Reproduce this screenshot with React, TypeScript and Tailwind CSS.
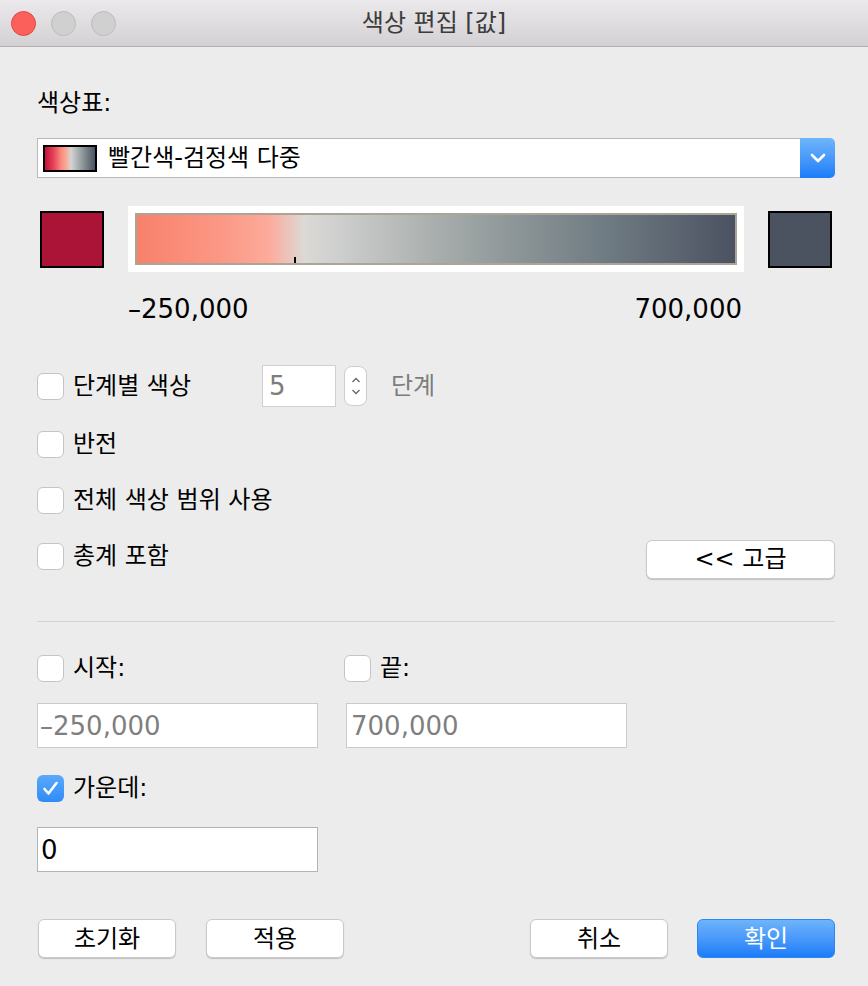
import React from "react";

const FONT = "font-['DejaVu_Sans','Noto_Sans_CJK_KR',sans-serif]";

function Checkbox({ checked = false }: { checked?: boolean }) {
  if (checked) {
    return (
      <div className="w-[27px] h-[27px] rounded-[6px] bg-gradient-to-b from-[#5aa9fb] to-[#2f8bf7] flex items-center justify-center shrink-0">
        <svg width="17" height="15" viewBox="0 0 17 15">
          <polyline points="2.5,8 6.5,12.5 14.5,2" fill="none" stroke="white" strokeWidth="2.6" strokeLinecap="round" strokeLinejoin="round" />
        </svg>
      </div>
    );
  }
  return <div className="w-[27px] h-[27px] rounded-[6px] bg-white border border-[#c4c4c4] shrink-0" />;
}

function Button({ label, primary = false }: { label: string; primary?: boolean }) {
  return (
    <div
      className={
        primary
          ? "w-[138px] h-[39px] rounded-[6px] bg-gradient-to-b from-[#6eb4fb] to-[#1a7cf8] border border-[#2d86f5] flex items-center justify-center text-white text-[24px] leading-none"
          : "w-[138px] h-[39px] rounded-[6px] bg-white border border-[#c9c9c9] shadow-[0_1px_1px_rgba(0,0,0,0.18)] flex items-center justify-center text-black text-[24px] leading-none"
      }
    >
      {label}
    </div>
  );
}

export default function App() {
  return (
    <div className={`w-[868px] h-[986px] bg-[#ececec] flex flex-col ${FONT} text-black`}>
      {/* Title bar */}
      <div className="h-[47px] shrink-0 bg-gradient-to-b from-[#ebe9eb] to-[#d3d1d3] border-b border-[#b1afb1] grid grid-cols-[1fr_auto_1fr] items-center">
        <div className="flex items-center gap-[15px] pl-[11px]">
          <div className="w-[25px] h-[25px] rounded-full bg-[#fc605a] border border-[#e2463f]" />
          <div className="w-[25px] h-[25px] rounded-full bg-[#d1d0d1] border border-[#bdbcbd]" />
          <div className="w-[25px] h-[25px] rounded-full bg-[#d1d0d1] border border-[#bdbcbd]" />
        </div>
        <div className="text-[24px] leading-none text-[#3c3c3c]">색상 편집 [값]</div>
        <div />
      </div>

      <div className="flex flex-col pl-[37px] pr-[33px]">
        {/* 색상표 label */}
        <div className="mt-[41px] h-[30px] flex items-center text-[24px] leading-none">색상표:</div>

        {/* Dropdown */}
        <div className="mt-[20px] h-[40px] flex">
          <div className="flex-1 bg-white border border-r-0 border-[#b8b8b8] flex items-center pl-[5px]">
            <div className="w-[54px] h-[27px] border-2 border-black bg-[linear-gradient(to_right,#c0133a_0%,#e8455a_18%,#f98a7c_32%,#fba898_42%,#d4d4d2_52%,#aab0b1_66%,#7a8489_82%,#4b5262_100%)]" />
            <div className="ml-[11px] text-[24px] leading-none">빨간색-검정색 다중</div>
          </div>
          <div className="w-[35px] rounded-r-[5px] bg-gradient-to-b from-[#6fb5fb] to-[#1a7cf9] flex items-center justify-center">
            <svg width="16" height="10" viewBox="0 0 16 10">
              <polyline points="2,2 8,8 14,2" fill="none" stroke="white" strokeWidth="2.6" strokeLinecap="round" strokeLinejoin="round" />
            </svg>
          </div>
        </div>

        {/* Color row */}
        <div className="mt-[28px] h-[66px] flex items-center gap-[24px] pl-[3px]">
          <div className="w-[64px] h-[57px] border-2 border-black bg-[#ab1337]" />
          <div className="w-[616px] h-[66px] bg-white p-[7px] flex">
            <div className="relative flex-1 border-2 border-[#aaa597] bg-[linear-gradient(to_right,#f8816b_0%,#fb9a87_15%,#fdaa9b_22%,#dcd9d6_28%,#cfd0cf_33%,#b4b8b6_45%,#939b9c_60%,#707c83_78%,#4b5262_100%)]">
              <div className="absolute left-[157px] bottom-0 w-[2px] h-[6px] bg-black" />
            </div>
          </div>
          <div className="w-[64px] h-[57px] border-2 border-black bg-[#4b5260]" />
        </div>

        {/* Range labels */}
        <div className="mt-[22px] h-[30px] flex items-center justify-between pl-[91px] pr-[93px] text-[26px] leading-none">
          <span>–250,000</span>
          <span>700,000</span>
        </div>

        {/* 단계별 색상 */}
        <div className="mt-[41px] h-[42px] flex items-center">
          <Checkbox />
          <div className="ml-[9px] w-[189px] text-[24px] leading-none">단계별 색상</div>
          <div className="w-[74px] h-[42px] bg-white border border-[#d0d0d0] flex items-center pl-[6px] text-[26px] leading-none text-[#7d7d7d]">5</div>
          <div className="ml-[8px] w-[23px] h-[40px] rounded-[8px] bg-white border border-[#cdcdcd] flex flex-col items-center justify-center gap-[6px]">
            <svg width="10" height="6" viewBox="0 0 10 6">
              <polyline points="1.5,5 5,1.5 8.5,5" fill="none" stroke="#6a6a6a" strokeWidth="1.4" />
            </svg>
            <svg width="10" height="6" viewBox="0 0 10 6">
              <polyline points="1.5,1 5,4.5 8.5,1" fill="none" stroke="#6a6a6a" strokeWidth="1.4" />
            </svg>
          </div>
          <div className="ml-[24px] text-[24px] leading-none text-[#7d7d7d]">단계</div>
        </div>

        {/* 반전 */}
        <div className="mt-[16px] h-[42px] flex items-center">
          <Checkbox />
          <div className="ml-[9px] text-[24px] leading-none">반전</div>
        </div>

        {/* 전체 색상 범위 사용 */}
        <div className="mt-[14px] h-[42px] flex items-center">
          <Checkbox />
          <div className="ml-[9px] text-[24px] leading-none">전체 색상 범위 사용</div>
        </div>

        {/* 총계 포함 + 고급 */}
        <div className="mt-[18px] h-[40px] flex items-center justify-between">
          <div className="flex items-center mb-[6px]">
            <Checkbox />
            <div className="ml-[9px] text-[24px] leading-none">총계 포함</div>
          </div>
          <div className="w-[189px] h-[39px] rounded-[6px] bg-white border border-[#c9c9c9] shadow-[0_1px_1px_rgba(0,0,0,0.18)] flex items-center justify-center text-[24px] leading-none">
            &lt;&lt; 고급
          </div>
        </div>

        {/* Separator */}
        <div className="mt-[42px] h-px bg-[#d2d2d2]" />

        {/* 시작 / 끝 */}
        <div className="mt-[31px] grid grid-cols-[281px_281px] gap-x-[28px]">
          <div className="h-[30px] flex items-center">
            <Checkbox />
            <div className="ml-[9px] text-[24px] leading-none">시작:</div>
          </div>
          <div className="h-[30px] flex items-center -ml-[2px]">
            <Checkbox />
            <div className="ml-[9px] text-[24px] leading-none">끝:</div>
          </div>
          <div className="mt-[20px] h-[45px] bg-white border border-[#cbcbcb] flex items-center pl-[2px] text-[26px] leading-none text-[#7f7f7f]">–250,000</div>
          <div className="mt-[20px] h-[45px] bg-white border border-[#cbcbcb] flex items-center pl-[4px] text-[26px] leading-none text-[#7f7f7f]">700,000</div>
        </div>

        {/* 가운데 */}
        <div className="mt-[25px] h-[30px] flex items-center">
          <Checkbox checked />
          <div className="ml-[9px] text-[24px] leading-none">가운데:</div>
        </div>
        <div className="mt-[24px] w-[281px] h-[45px] bg-white border border-[#b3b3b3] flex items-center pl-[3px] text-[26px] leading-none">0</div>

        {/* Bottom buttons */}
        <div className="mt-[47px] flex items-center">
          <div className="ml-[1px]">
            <Button label="초기화" />
          </div>
          <div className="ml-[30px]">
            <Button label="적용" />
          </div>
          <div className="flex-1" />
          <Button label="취소" />
          <div className="ml-[29px]">
            <Button label="확인" primary />
          </div>
        </div>
      </div>
    </div>
  );
}
